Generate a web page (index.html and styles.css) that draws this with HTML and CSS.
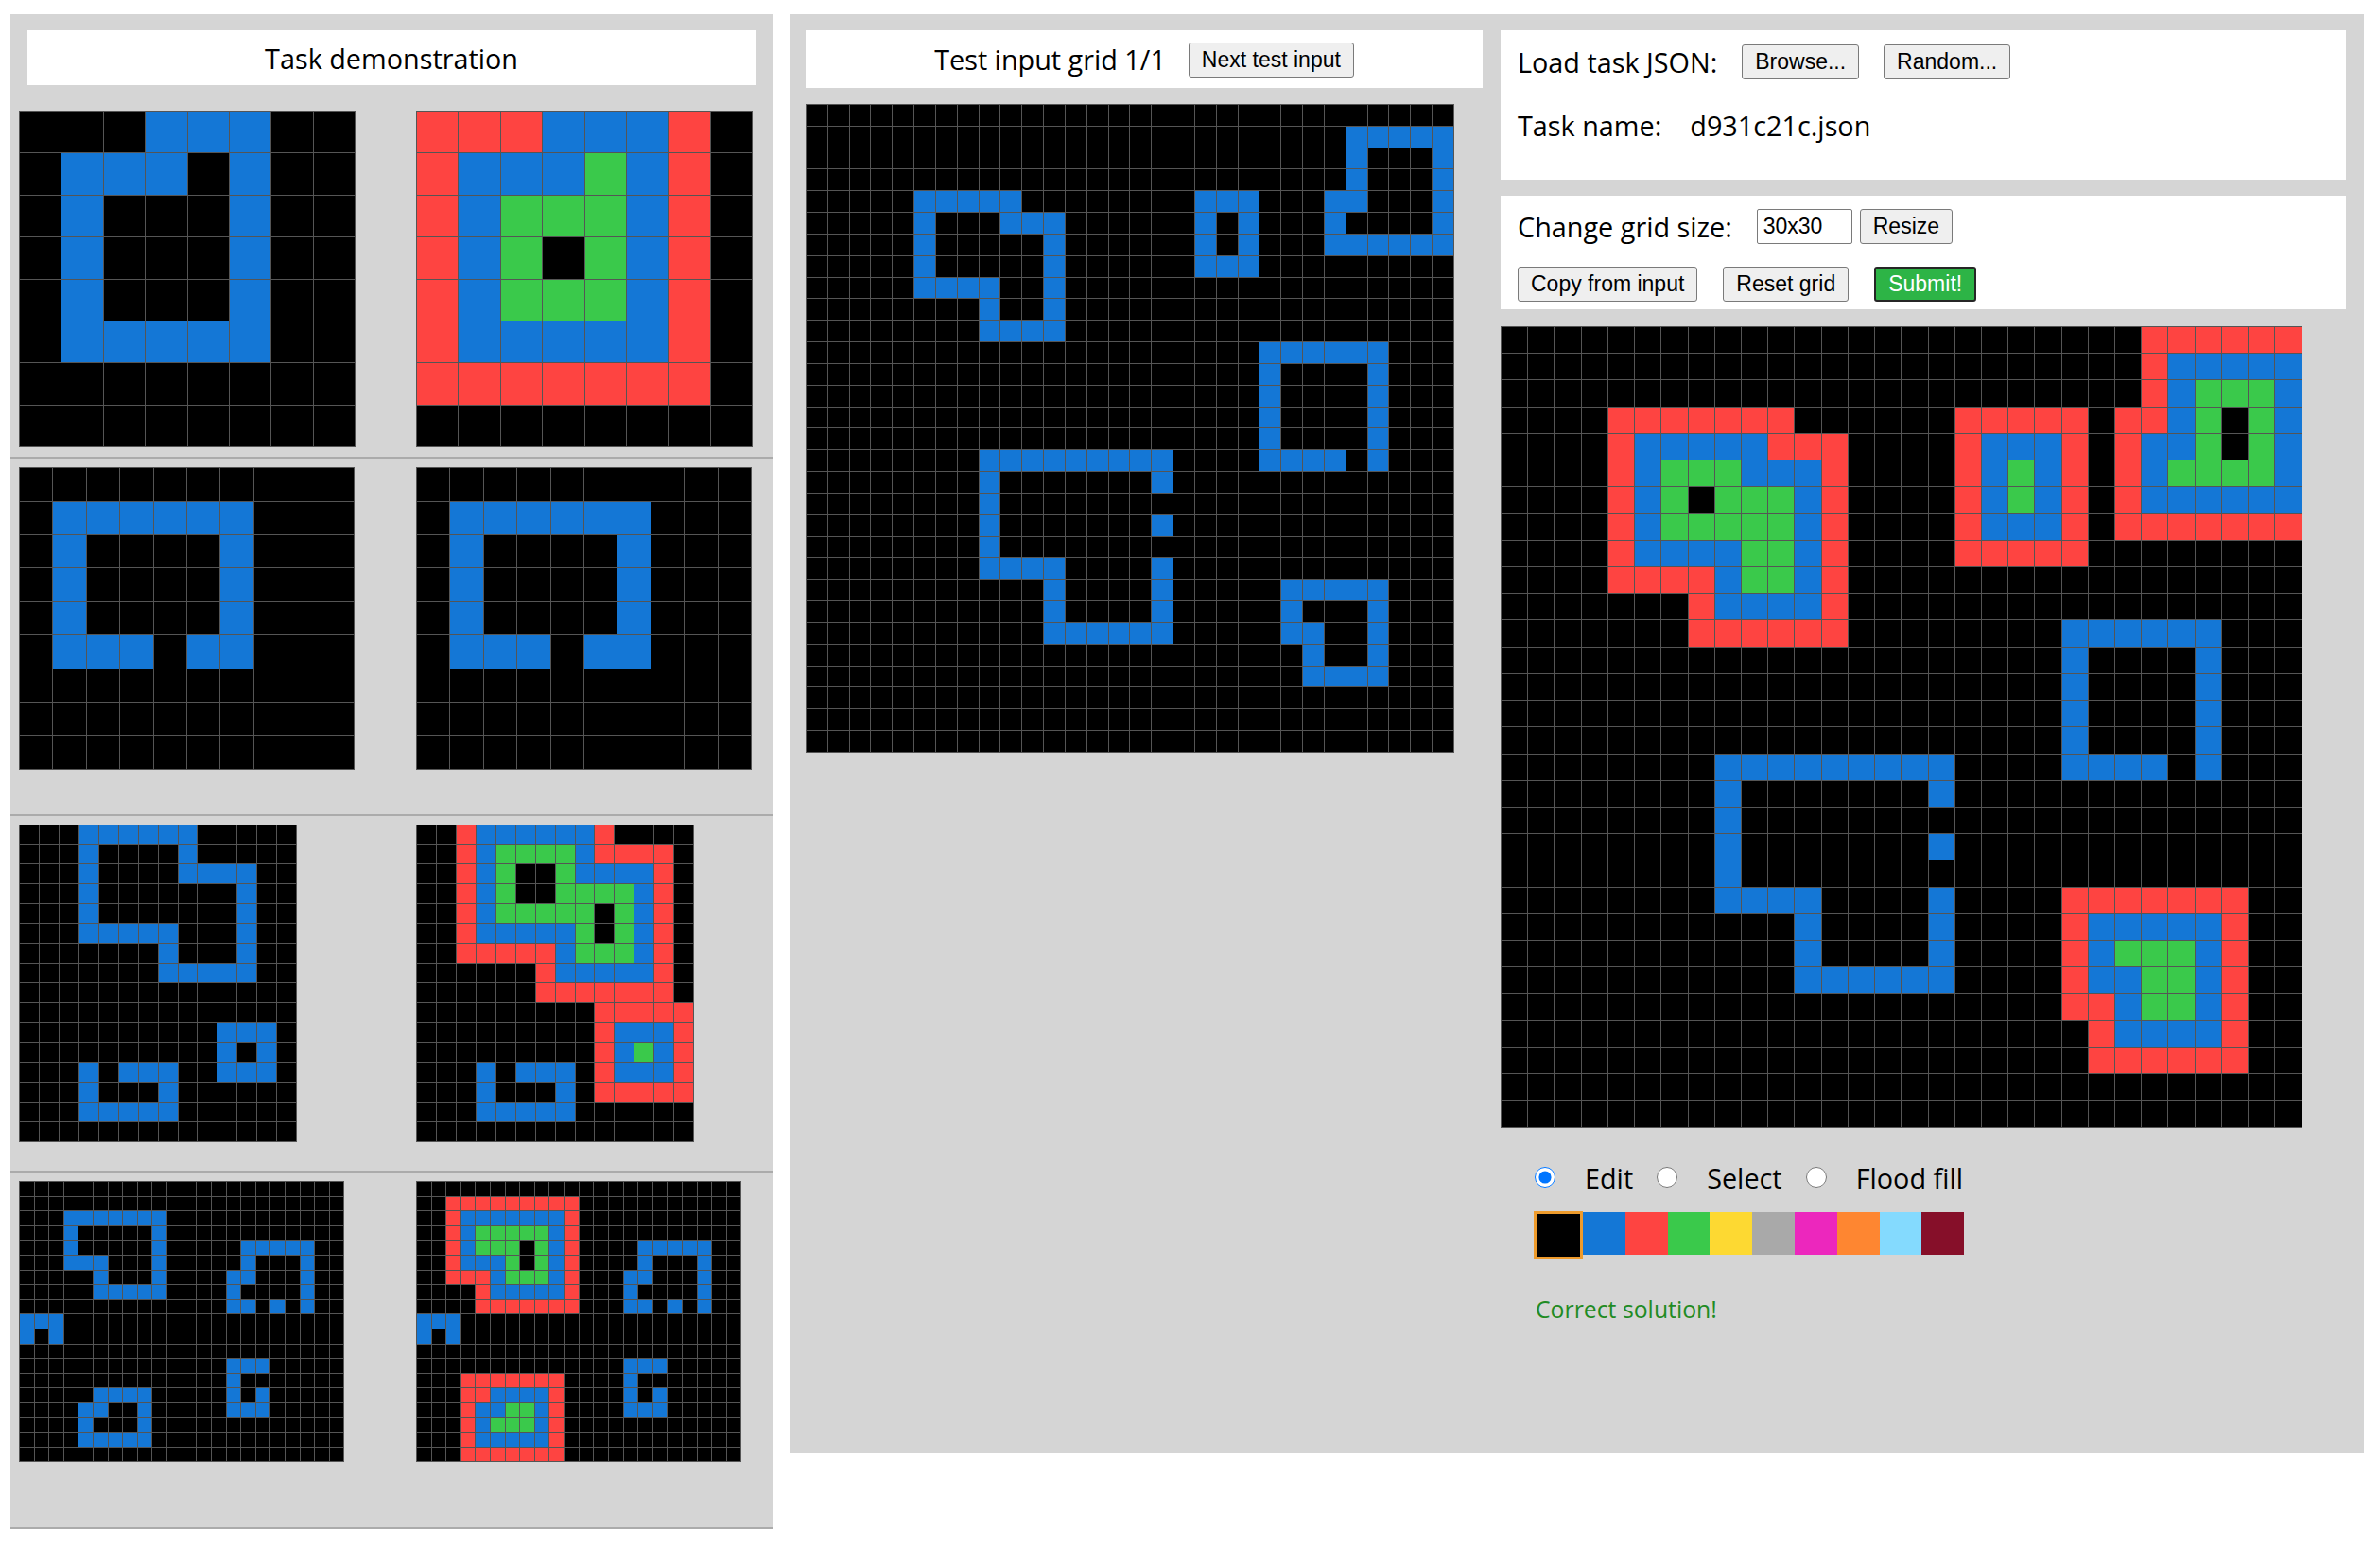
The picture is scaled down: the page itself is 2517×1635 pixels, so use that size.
FILE: index.html
```html
<!DOCTYPE html>
<html lang="en">
<head>
<meta charset="utf-8">
<title>ARC testing interface</title>
<link rel="stylesheet" href="styles.css">
</head>
<body>
<div class="workspace">
  <section class="demo-panel">
    <div class="title-box">Task demonstration</div>
    <div class="pairs">
      <div class="pair">
        <div class="half"><div class="grid" id="d1i"></div></div>
        <div class="half"><div class="grid" id="d1o"></div></div>
      </div>
      <div class="pair">
        <div class="half"><div class="grid" id="d2i"></div></div>
        <div class="half"><div class="grid" id="d2o"></div></div>
      </div>
      <div class="pair">
        <div class="half"><div class="grid" id="d3i"></div></div>
        <div class="half"><div class="grid" id="d3o"></div></div>
      </div>
      <div class="pair">
        <div class="half"><div class="grid" id="d4i"></div></div>
        <div class="half"><div class="grid" id="d4o"></div></div>
      </div>
    </div>
  </section>

  <section class="work-panel">
    <div class="test-col">
      <div class="title-box test-title">
        <span>Test input grid 1/1</span>
        <button class="btn">Next test input</button>
      </div>
      <div class="grid test-grid" id="ti"></div>
    </div>

    <div class="edit-col">
      <div class="box load-box">
        <div class="row load-row">
          <span>Load task JSON:</span>
          <button class="btn">Browse...</button>
          <button class="btn">Random...</button>
        </div>
        <div class="row name-row">
          <span>Task name:</span>
          <span>d931c21c.json</span>
        </div>
      </div>

      <div class="box size-box">
        <div class="row size-row">
          <span>Change grid size:</span>
          <input class="size-input" type="text" value="30x30">
          <button class="btn resize">Resize</button>
        </div>
        <div class="row action-row">
          <button class="btn">Copy from input</button>
          <button class="btn">Reset grid</button>
          <button class="btn submit">Submit!</button>
        </div>
      </div>

      <div class="grid out-grid" id="out"></div>

      <div class="tools">
        <input class="radio" type="radio" name="tool" id="t-edit" checked>
        <label for="t-edit">Edit</label>
        <input class="radio" type="radio" name="tool" id="t-select">
        <label for="t-select">Select</label>
        <input class="radio" type="radio" name="tool" id="t-fill">
        <label for="t-fill">Flood fill</label>
      </div>

      <div class="palette">
        <div class="swatch s0 selected"></div>
        <div class="swatch s1"></div>
        <div class="swatch s2"></div>
        <div class="swatch s3"></div>
        <div class="swatch s4"></div>
        <div class="swatch s5"></div>
        <div class="swatch s6"></div>
        <div class="swatch s7"></div>
        <div class="swatch s8"></div>
        <div class="swatch s9"></div>
      </div>

      <div class="result">Correct solution!</div>
    </div>
  </section>
</div>
<script src="script.js"></script>
</body>
</html>
```

FILE: styles.css
```css
* { box-sizing: border-box; }

body {
  margin: 0;
  background: #ffffff;
  color: #000000;
  font-family: "Open Sans", "Liberation Sans", sans-serif;
  font-size: 28.8px;
}

.workspace {
  display: flex;
  align-items: flex-start;
  padding: 15px 0 0 11px;
}

/* ---------- demonstration column ---------- */
.demo-panel {
  flex: none;
  width: 806px;
  background: #d5d5d5;
  padding-top: 17px;
}

.title-box {
  background: #ffffff;
  height: 58px;
  margin: 0 18px;
  display: flex;
  align-items: center;
  justify-content: center;
}

.pairs { margin-top: 18px; }

.pair {
  display: flex;
  height: 377.3px;
  padding: 9px 0 0 9px;
  border-bottom: 2px solid #ababab;
}

.half { flex: 1 1 auto; }
.half:first-child { flex: none; width: 420px; }

/* ---------- grids ---------- */
.grid {
  display: grid;
  gap: 1px;
  width: max-content;
  background: #555555;
  border: 1px solid #555555;
}

.cell { width: var(--c); height: var(--c); }

.s0 { background: #000000; }
.s1 { background: #1477d6; }
.s2 { background: #fe4441; }
.s3 { background: #3ac94b; }
.s4 { background: #fdd932; }
.s5 { background: #a9a9a9; }
.s6 { background: #ec27bd; }
.s7 { background: #fe8631; }
.s8 { background: #84dafe; }
.s9 { background: #860f29; }

/* ---------- work panel ---------- */
.work-panel {
  flex: none;
  display: flex;
  align-items: flex-start;
  gap: 19px;
  width: 1665px;
  height: 1522px;
  margin-left: 18px;
  padding: 17px 19px 0 17px;
  background: #d5d5d5;
}

.test-col { flex: none; width: 716px; }

.test-title {
  margin: 0;
  height: 61px;
  gap: 24px;
}

.test-grid { margin-top: 17px; }

.edit-col { flex: none; width: 894px; }

.box { background: #ffffff; }

.row {
  display: flex;
  align-items: center;
  height: 38px;
}

.load-box {
  height: 158px;
  padding: 14px 18px 0;
}

.load-row { gap: 26px; }

.name-row {
  margin-top: 29px;
  gap: 30px;
}

.size-box {
  height: 120px;
  margin-top: 17px;
  padding: 13px 18px 0;
}

.size-row .size-input { margin-left: 26px; }
.size-row .resize { margin-left: 8px; }

.action-row {
  margin-top: 23px;
  gap: 27px;
}

.btn {
  height: 37px;
  padding: 0 13px;
  font-family: "Liberation Sans", Arial, sans-serif;
  font-size: 23px;
  color: #000000;
  background: #efefef;
  border: 1.5px solid #7a7a7a;
  border-radius: 3px;
}

.test-title .btn { margin-top: 2px; }

.submit {
  color: #ffffff;
  background: #2db446;
  border: 2px solid #262626;
}

.size-input {
  width: 101px;
  height: 37px;
  padding: 0 6px;
  font-family: "Liberation Sans", Arial, sans-serif;
  font-size: 23px;
  color: #000000;
  background: #ffffff;
  border: 1.5px solid #7a7a7a;
  border-radius: 2px;
}

.out-grid { margin-top: 18px; }

.tools {
  display: flex;
  align-items: center;
  height: 37px;
  margin-top: 34px;
  padding-left: 36px;
}

.radio {
  width: 22px;
  height: 22px;
  margin: 0;
}

.tools label { margin-left: 31px; margin-right: 25px; }

.palette {
  display: flex;
  align-items: flex-start;
  margin-top: 18px;
  padding-left: 35px;
}

.swatch {
  width: 44.8px;
  height: 45px;
}

.swatch.selected {
  width: 52px;
  height: 51px;
  margin-top: -1px;
  border: 3px solid #ee9b2c;
}

.result {
  margin-top: 35px;
  padding-left: 37px;
  color: #1f8b24;
  font-size: 24.8px;
  line-height: 34px;
}
```

FILE: script.js
```js
var GRIDS = {
  d1i: { p: 44.4, rows: [
    "00011100",
    "01110100",
    "01000100",
    "01000100",
    "01000100",
    "01111100",
    "00000000",
    "00000000"
  ]},
  d1o: { p: 44.4, rows: [
    "22211120",
    "21113120",
    "21333120",
    "21303120",
    "21333120",
    "21111120",
    "22222220",
    "00000000"
  ]},
  d2i: { p: 35.4, rows: [
    "0000000000",
    "0111111000",
    "0100001000",
    "0100001000",
    "0100001000",
    "0111011000",
    "0000000000",
    "0000000000",
    "0000000000"
  ]},
  d3i: { p: 20.95, rows: [
    "00011111100000",
    "00010000100000",
    "00010000111100",
    "00010000000100",
    "00010000000100",
    "00011111000100",
    "00000001000100",
    "00000001111100",
    "00000000000000",
    "00000000000000",
    "00000000001110",
    "00000000001010",
    "00010111001110",
    "00010001000000",
    "00011111000000",
    "00000000000000"
  ]},
  d3o: { p: 20.95, rows: [
    "00211111120000",
    "00213333122220",
    "00213003111120",
    "00213003333120",
    "00213333303120",
    "00211111303120",
    "00222221333120",
    "00000021111120",
    "00000022222220",
    "00000000022222",
    "00000000021112",
    "00000000021312",
    "00010111021112",
    "00010001022222",
    "00011111000000",
    "00000000000000"
  ]},
  d4i: { p: 15.62, rows: [
    "0000000000000000000000",
    "0000000000000000000000",
    "0001111111000000000000",
    "0001000001000000000000",
    "0001000001000001111100",
    "0001110001000001000100",
    "0000010001000011000100",
    "0000011111000010000100",
    "0000000000000011010100",
    "1110000000000000000000",
    "1010000000000000000000",
    "0000000000000000000000",
    "0000000000000011100000",
    "0000000000000010000000",
    "0000011110000010100000",
    "0000110010000011100000",
    "0000100010000000000000",
    "0000111110000000000000",
    "0000000000000000000000"
  ]},
  d4o: { p: 15.62, rows: [
    "0000000000000000000000",
    "0022222222200000000000",
    "0021111111200000000000",
    "0021333331200000000000",
    "0021333031200001111100",
    "0021113031200001000100",
    "0022213331200011000100",
    "0000211111200010000100",
    "0000222222200011010100",
    "1110000000000000000000",
    "1010000000000000000000",
    "0000000000000000000000",
    "0000000000000011100000",
    "0002222222000010000000",
    "0002211112000010100000",
    "0002113312000011100000",
    "0002133312000000000000",
    "0002111112000000000000",
    "0002222222000000000000"
  ]},
  ti: { p: 22.83, rows: [
    "000000000000000000000000000000",
    "000000000000000000000000011111",
    "000000000000000000000000010001",
    "000000000000000000000000010001",
    "000001111100000000111000110001",
    "000001000111000000101000100001",
    "000001000001000000101000111111",
    "000001000001000000111000000000",
    "000001111001000000000000000000",
    "000000001001000000000000000000",
    "000000001111000000000000000000",
    "000000000000000000000111111000",
    "000000000000000000000100001000",
    "000000000000000000000100001000",
    "000000000000000000000100001000",
    "000000000000000000000100001000",
    "000000001111111110000111101000",
    "000000001000000010000000000000",
    "000000001000000000000000000000",
    "000000001000000010000000000000",
    "000000001000000000000000000000",
    "000000001111000010000000000000",
    "000000000001000010000011111000",
    "000000000001000010000010001000",
    "000000000001111110000011001000",
    "000000000000000000000001001000",
    "000000000000000000000001111000",
    "000000000000000000000000000000",
    "000000000000000000000000000000",
    "000000000000000000000000000000"
  ]},
  out: { p: 28.23, rows: [
    "000000000000000000000000222222",
    "000000000000000000000000211111",
    "000000000000000000000000213331",
    "000022222220000002222202213031",
    "000021111122200002111202113031",
    "000021333111200002131202133331",
    "000021303331200002131202111111",
    "000021333331200002111202222222",
    "000021111331200002222200000000",
    "000022221331200000000000000000",
    "000000021111200000000000000000",
    "000000022222200000000111111000",
    "000000000000000000000100001000",
    "000000000000000000000100001000",
    "000000000000000000000100001000",
    "000000000000000000000100001000",
    "000000001111111110000111101000",
    "000000001000000010000000000000",
    "000000001000000000000000000000",
    "000000001000000010000000000000",
    "000000001000000000000000000000",
    "000000001111000010000222222200",
    "000000000001000010000211111200",
    "000000000001000010000213331200",
    "000000000001111110000211331200",
    "000000000000000000000221331200",
    "000000000000000000000021111200",
    "000000000000000000000022222200",
    "000000000000000000000000000000",
    "000000000000000000000000000000"
  ]}
};
GRIDS.d2o = GRIDS.d2i;

Object.keys(GRIDS).forEach(function (id) {
  var el = document.getElementById(id);
  if (!el) return;
  var g = GRIDS[id];
  var size = (g.p - 1) + "px";
  el.style.setProperty("--c", size);
  el.style.gridTemplateColumns = "repeat(" + g.rows[0].length + ", " + size + ")";
  var html = "";
  g.rows.forEach(function (row) {
    for (var i = 0; i < row.length; i++) {
      html += '<div class="cell s' + row.charAt(i) + '"></div>';
    }
  });
  el.innerHTML = html;
});
```
